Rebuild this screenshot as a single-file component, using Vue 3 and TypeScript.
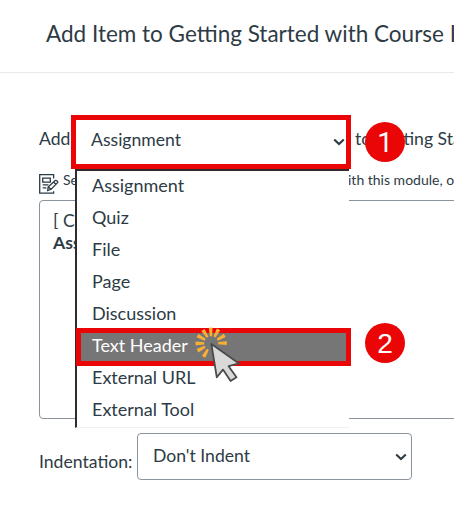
<script setup lang="ts">
import { ref } from 'vue'

const itemTypes: string[] = [
  'Assignment',
  'Quiz',
  'File',
  'Page',
  'Discussion',
  'Text Header',
  'External URL',
  'External Tool',
]
const current = ref('Assignment')
const hovered = ref('Text Header')
const rays: number[] = [-2, 28, 60, 90, 209, 241, 269, 299, 328]
</script>

<template>
  <div class="dialog">
    <header class="title-bar">
      <h2 class="title">Add Item to Getting Started with Course I</h2>
    </header>

    <main class="body">
      <div class="add-row">
        <span class="add-label">Add</span>
        <div class="type-select">
          <span class="type-value">{{ current }}</span>
          <svg class="chevron" viewBox="0 0 12 8"><path d="M1.2 1.4 6 6.1l4.8-4.7" /></svg>

          <ul class="menu">
            <li
              v-for="item in itemTypes"
              :key="item"
              class="option"
              :class="{ active: item === hovered }"
            >
              <span>{{ item }}</span>
            </li>
          </ul>
        </div>
        <span class="to-label">to Getting Sta</span>
        <span class="badge badge-one">1</span>
      </div>

      <div class="hint-row">
        <svg class="note-icon" viewBox="0 0 20 20">
          <path d="M14.6 4.5V.7H.7v18.5h13.9v-2" />
          <path d="M3.7 4.2h7.6v3.9H3.7zM3.7 10.9h5.8M3.7 13.8h3.6" />
          <path d="m9.2 12.9 7-6.3c1-.8 3.2 1 2.4 2.1l-6.5 6.6-3.4 1.2zM14.6 8l2.2 2.3M9.2 12.9l2.9 2.4" />
        </svg>
        <span class="hint hint-start">Se</span>
        <span class="hint">ith this module, o</span>
      </div>

      <div class="listbox">
        <div class="create">[ C</div>
        <div class="group">Ass</div>
      </div>

      <div class="indent-row">
        <span class="indent-label">Indentation:</span>
        <div class="indent-select">
          <span>Don't Indent</span>
          <svg class="chevron" viewBox="0 0 12 8"><path d="M1.2 1.4 6 6.1l4.8-4.7" /></svg>
        </div>
      </div>
    </main>

    <span class="badge badge-two">2</span>
    <svg class="pointer" viewBox="0 0 50 60">
      <g class="rays" transform="translate(16.2 16.2)">
        <path v-for="angle in rays" :key="angle" d="M-1.1-7-1.9-15.6h3.8L1.1-7z" :transform="`rotate(${angle})`" />
      </g>
      <path class="arrow" d="M16.4 17 21.8 50.3 28 42.6 35.6 54 41.5 50.2 33.6 39.2 44 36.4z" />
    </svg>
  </div>
</template>

<style>
body {
  background: #fff;
  overflow: hidden;
}
</style>

<style scoped>
.dialog {
  position: relative;
  box-sizing: border-box;
  width: 454px;
  height: 505px;
  overflow: hidden;
  font-family: Lato, 'Liberation Sans', sans-serif;
  font-size: 17.6px;
  color: #2d3b45;
  white-space: nowrap;
}
.title-bar {
  box-sizing: border-box;
  height: 73px;
  padding: 19px 0 0 46px;
  border-bottom: 1px solid #e8eaec;
}
.title {
  margin: 0;
  font-size: 22.5px;
  line-height: 30px;
  font-weight: 400;
}
.body {
  padding: 42px 0 0 39px;
}
.add-row {
  position: relative;
  display: flex;
  height: 54px;
}
.add-label {
  flex: none;
  width: 32px;
  line-height: 47px;
}
.type-select {
  position: relative;
  box-sizing: border-box;
  display: flex;
  flex: none;
  justify-content: space-between;
  width: 280px;
  height: 54px;
  padding: 0 1px 0 15px;
  border: 5px solid #ea0606;
  background: #fff;
  line-height: 39px;
}
.chevron {
  flex: none;
  width: 12px;
  height: 8px;
  fill: none;
  stroke: #2d3b45;
  stroke-width: 2.1;
}
.type-select > .chevron {
  margin-top: 18px;
}
.to-label {
  margin-left: 4px;
  line-height: 47px;
}
.menu {
  position: absolute;
  z-index: 1;
  top: 49px;
  left: -1px;
  box-sizing: border-box;
  width: 274px;
  height: 259px;
  margin: 0;
  padding: 0;
  list-style: none;
  background: #fff;
  border-top: 2px solid #302c2e;
  border-left: 2px solid #302c2e;
  border-bottom: 1px solid #f0f0f0;
  font-size: 18px;
}
.option {
  box-sizing: border-box;
  height: 32px;
  padding-left: 15px;
  line-height: 29px;
}
.option.active {
  width: 275px;
  height: 38px;
  margin: -3px 0 -3px -1px;
  padding-left: 11px;
  border: 5px solid #ea0606;
  background: #767676;
  color: #fff;
  line-height: 25px;
}
.badge {
  position: absolute;
  z-index: 2;
  width: 40px;
  height: 40px;
  border-radius: 50%;
  background: #ea0606;
  color: #fff;
  font-family: 'Liberation Sans', sans-serif;
  font-size: 28px;
  line-height: 41px;
  text-align: center;
}
.badge-one {
  top: 7px;
  left: 326px;
  font-family: Roboto, sans-serif;
}
.badge-two {
  top: 323px;
  left: 365px;
}
.hint-row {
  display: flex;
  height: 31px;
}
.note-icon {
  flex: none;
  width: 20px;
  height: 20px;
  margin: 5px 4px 0 0;
  fill: none;
  stroke: #2d3b45;
  stroke-width: 1.3;
}
.hint {
  font-size: 14px;
  line-height: 22px;
}
.hint-start {
  flex: none;
  width: 285px;
}
.listbox {
  box-sizing: border-box;
  width: 440px;
  height: 219px;
  padding: 9px 13px;
  border: 1px solid #8b949e;
  border-radius: 4px;
  line-height: 22px;
}
.group {
  font-weight: 700;
}
.indent-row {
  display: flex;
  padding-top: 14px;
}
.indent-label {
  flex: none;
  width: 98px;
  line-height: 57px;
}
.indent-select {
  box-sizing: border-box;
  display: flex;
  flex: none;
  justify-content: space-between;
  width: 275px;
  height: 47px;
  padding: 0 4px 0 15px;
  border: 1px solid #8b949e;
  border-radius: 4px;
  line-height: 44px;
}
.indent-select > .chevron {
  margin-top: 19px;
}
.pointer {
  position: absolute;
  z-index: 3;
  top: 327px;
  left: 195px;
  width: 50px;
  height: 60px;
}
.rays {
  fill: #fbb034;
}
.arrow {
  fill: #d9d9d9;
  stroke: #4b4b4b;
  stroke-width: 1.8;
  stroke-linejoin: round;
}
</style>
